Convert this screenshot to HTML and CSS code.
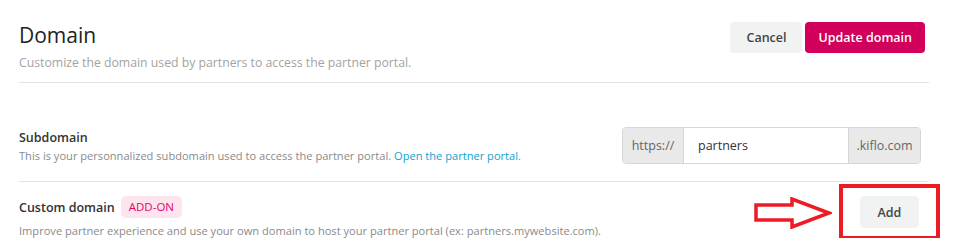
FILE: index.html
```html
<!DOCTYPE html>
<html lang="en">
<head>
    <meta charset="UTF-8">
    <meta name="viewport" content="width=device-width, initial-scale=1.0">
    <title>Domain</title>
    <link rel="stylesheet" href="styles.css">
</head>
<body>
    <div class="page">
        <div class="header">
            <div>
                <h1>Domain</h1>
                <div class="subtitle">Customize the domain used by partners to access the partner portal.</div>
            </div>
            <div class="actions">
                <button class="btn btn-light btn-cancel">Cancel</button>
                <button class="btn btn-primary">Update domain</button>
            </div>
        </div>

        <div class="row row-sub">
            <div class="row-text">
                <div class="row-title">Subdomain</div>
                <div class="row-desc">This is your personnalized subdomain used to access the partner portal. <a href="#">Open the partner portal</a>.</div>
            </div>
            <div class="input-group">
                <span class="addon">https://</span>
                <input type="text" value="partners">
                <span class="addon addon-right">.kiflo.com</span>
            </div>
        </div>

        <div class="row row-custom">
            <div class="row-text">
                <div class="row-title">Custom domain <span class="badge">ADD-ON</span></div>
                <div class="row-desc">Improve partner experience and use your own domain to host your partner portal (ex: partners.mywebsite.com).</div>
            </div>
            <button class="btn btn-light btn-add">Add</button>

            <!-- annotation -->
            <svg class="note-arrow" width="78" height="32" viewBox="0 0 78 32">
                <path d="M2 8 H38 V2 L75 16 L38 30 V23 H2 Z" fill="#fff" stroke="#ed1c24" stroke-width="3.5" stroke-linejoin="miter"/>
            </svg>
            <div class="note-box"></div>
        </div>
    </div>
</body>
</html>
```

FILE: styles.css
```css
body {
    margin: 0;
    font-family: "Open Sans", "Noto Sans", sans-serif;
    background-color: #fff;
    color: #333;
}
.page {
    width: 910px;
    padding: 22px 0 0 19px;
}
.header {
    display: flex;
    justify-content: space-between;
    align-items: flex-start;
    padding-right: 4px;
    padding-bottom: 11px;
    border-bottom: 1px solid #e3e3e3;
}
h1 {
    margin: 0;
    font-size: 21px;
    font-weight: 400;
    color: #222;
    line-height: 26px;
}
.subtitle {
    margin-top: 6px;
    font-size: 12.25px;
    color: #a3a3a3;
}
.actions {
    display: flex;
    gap: 3px;
}
.btn {
    font-family: inherit;
    font-size: 12.5px;
    font-weight: 600;
    height: 31px;
    padding: 0 13px;
    border: none;
    border-radius: 4px;
    cursor: pointer;
}
.btn-cancel {
    width: 72px;
    padding: 0;
}
.btn-light {
    background-color: #f1f2f2;
    color: #444;
}
.btn-primary {
    background-color: #d1005a;
    color: #fff;
}
.row {
    display: flex;
    justify-content: space-between;
    align-items: center;
    border-bottom: 1px solid #e3e3e3;
    position: relative;
}
.row-sub {
    padding: 44px 8px 17px 0;
}
.row-custom {
    border-bottom: none;
    padding: 14px 10px 0 0;
}
.row-title {
    font-size: 12.5px;
    font-weight: 600;
    color: #333;
    display: flex;
    align-items: center;
    gap: 6px;
}
.row-desc {
    margin-top: 2px;
    font-size: 11.1px;
    color: #8a8a8a;
}
.row-custom .row-desc {
    margin-top: 5px;
}
.row-desc a {
    color: #0fa3cf;
    text-decoration: none;
}
.input-group {
    display: flex;
    width: 299px;
    height: 37px;
    border: 1px solid #d6d6d6;
    border-radius: 4px;
    overflow: hidden;
    box-sizing: border-box;
}
.addon {
    display: flex;
    align-items: center;
    justify-content: center;
    width: 60px;
    background-color: #e9e9e9;
    color: #666;
    font-size: 12.5px;
    border-right: 1px solid #d6d6d6;
}
.addon-right {
    width: 71px;
    border-right: none;
    border-left: 1px solid #d6d6d6;
}
.input-group input {
    flex: 1;
    min-width: 0;
    border: none;
    outline: none;
    padding: 0 14px;
    font-family: inherit;
    font-size: 12.5px;
    color: #333;
}
.badge {
    display: inline-block;
    padding: 3px 8px;
    border-radius: 5px;
    background-color: #fde4ee;
    color: #e0066c;
    font-size: 11.5px;
    font-weight: 500;
    line-height: 16px;
}
.btn-add {
    width: 59px;
    height: 32px;
    padding: 0;
    margin-bottom: 10px;
}
.note-arrow {
    position: absolute;
    left: 735px;
    top: 15px;
}
.note-box {
    position: absolute;
    left: 820px;
    top: 2px;
    width: 101px;
    height: 56px;
    border: 4px solid #ed1c24;
    box-sizing: border-box;
}
```
